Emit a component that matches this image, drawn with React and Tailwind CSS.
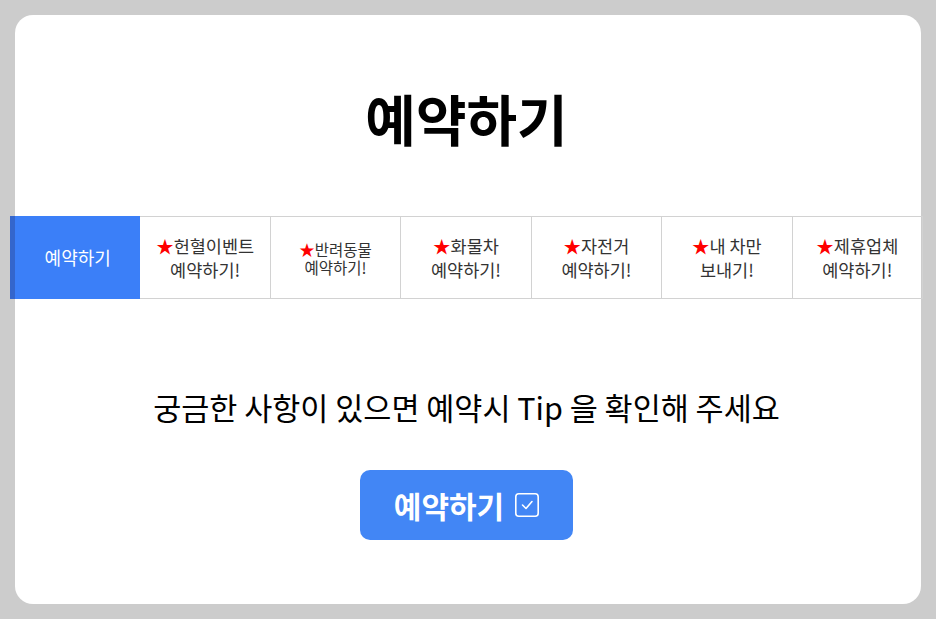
const tabs = [
  { top: "헌혈이벤트", bottom: "예약하기!" },
  { top: "반려동물", bottom: "예약하기!", small: true },
  { top: "화물차", bottom: "예약하기!" },
  { top: "자전거", bottom: "예약하기!" },
  { top: "내 차만", bottom: "보내기!" },
  { top: "제휴업체", bottom: "예약하기!" },
]

function CheckBox() {
  return (
    <svg width="24" height="24" viewBox="0 0 24 24" fill="none" stroke="currentColor" strokeWidth="1.6" strokeLinecap="round" strokeLinejoin="round">
      <rect x="0.8" y="0.8" width="22.4" height="22.4" rx="3" />
      <path d="M7.5 12 L11 15.5 L17 8.5" />
    </svg>
  )
}

export default function App() {
  return (
    <div className="min-h-[619px] bg-[#cccccc] pt-[15px] pb-[15px] px-[15px] font-['Noto_Sans_CJK_KR','Noto_Sans',sans-serif]">
      <div className="h-[589px] bg-white rounded-[18px] pr-[3px] flex flex-col items-center">
        <h1 className="mt-[70px] text-[55px] leading-[64px] font-bold text-black">예약하기</h1>

        {/* Tabs */}
        <div className="mt-[67px] self-stretch -ml-[5px] -mr-[5px] grid grid-cols-7 h-[83px]">
          <button className="bg-[#3b7ff8] border-l-[5px] border-[#3466cc] text-white text-[18px] flex items-center justify-center">
            예약하기
          </button>
          {tabs.map(t => (
            <button
              key={t.top}
              className={`border-y border-r border-[#d2d2d2] text-[#333] flex flex-col items-center justify-center ${
                t.small ? "text-[15.5px] leading-[18px]" : "text-[17.5px] leading-[24px]"
              }`}
            >
              <span><span className="text-[#ff0000]">★</span>{t.top}</span>
              <span>{t.bottom}</span>
            </button>
          ))}
        </div>

        <p className="mt-[87px] text-[30.5px] leading-[42px] text-black">
          궁금한 사항이 있으면 예약시 Tip 을 확인해 주세요
        </p>

        <button className="mt-[42px] w-[213px] h-[70px] rounded-[10px] bg-[#4286f5] text-white flex items-center justify-center gap-[11px]">
          <span className="text-[30px] font-bold leading-none">예약하기</span>
          <CheckBox />
        </button>
      </div>
    </div>
  )
}
